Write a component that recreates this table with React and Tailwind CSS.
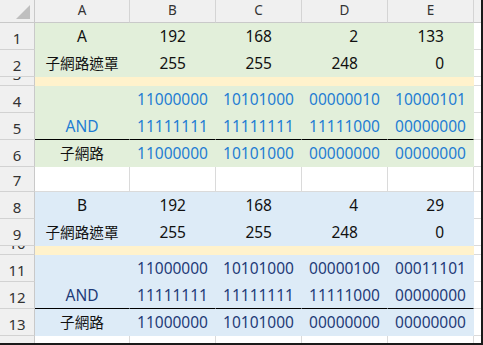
import React from "react";

const FILL = {
  g: "bg-[#E2EFDA] border-r-[#E2EFDA]",
  b: "bg-[#DDEBF7] border-r-[#DDEBF7]",
  y: "bg-[#FFF2CC] border-r-[#FFF2CC]",
  w: "bg-white border-r-[#DADADA]",
};
const BOTTOM = {
  g: "border-b-[#E2EFDA]",
  b: "border-b-[#DDEBF7]",
  y: "border-b-[#FFF2CC]",
  w: "border-b-[#DADADA]",
  k: "border-b-black",
};
const TEXT = {
  k: "text-[#111]",
  blue: "text-[#1F7DD3]",
  navy: "text-[#1F3B78]",
};

const num = (t) => ({ t, kind: "num", c: "k" });
const bin = (t, c) => ({ t, kind: "bin", c });
const lbl = (t, c = "k") => ({ t, kind: "lbl", c });

const rows = [
  { n: "1", f: "g", cells: [lbl("A"), num("192"), num("168"), num("2"), num("133")] },
  { n: "2", f: "g", cells: [lbl("子網路遮罩"), num("255"), num("255"), num("248"), num("0")] },
  { n: "3", f: "y", h: "h-[9px]" },
  {
    n: "4",
    f: "g",
    cells: [lbl(""), ...["11000000", "10101000", "00000010", "10000101"].map((t) => bin(t, "blue"))],
  },
  {
    n: "5",
    f: "g",
    line: true,
    cells: [lbl("AND", "blue"), ...["11111111", "11111111", "11111000", "00000000"].map((t) => bin(t, "blue"))],
  },
  {
    n: "6",
    f: "g",
    cells: [lbl("子網路"), ...["11000000", "10101000", "00000000", "00000000"].map((t) => bin(t, "blue"))],
  },
  { n: "7", f: "w", h: "h-[25px]" },
  { n: "8", f: "b", cells: [lbl("B"), num("192"), num("168"), num("4"), num("29")] },
  { n: "9", f: "b", cells: [lbl("子網路遮罩"), num("255"), num("255"), num("248"), num("0")] },
  { n: "10", f: "y", h: "h-[9px]" },
  {
    n: "11",
    f: "b",
    cells: [lbl(""), ...["11000000", "10101000", "00000100", "00011101"].map((t) => bin(t, "navy"))],
  },
  {
    n: "12",
    f: "b",
    line: true,
    cells: [lbl("AND", "navy"), ...["11111111", "11111111", "11111000", "00000000"].map((t) => bin(t, "navy"))],
  },
  {
    n: "13",
    f: "b",
    cells: [lbl("子網路"), ...["11000000", "10101000", "00000000", "00000000"].map((t) => bin(t, "navy"))],
  },
  { n: "14", f: "w" },
];

const colW = ["w-[95px]", "w-[86px]", "w-[86px]", "w-[86px]", "w-[86px]"];

function Cell({ cell, fill, bottom, width }) {
  const align =
    cell && cell.kind === "num" ? "justify-end pr-[29px]" : "justify-center";
  return (
    <div
      className={`${width} h-full shrink-0 flex items-center ${align} border-r border-b ${FILL[fill]} ${BOTTOM[bottom]} ${
        cell ? TEXT[cell.c] : ""
      } pt-[1px] whitespace-nowrap`}
    >
      {cell && /[\u4e00-\u9fff]/.test(cell.t) ? (
        <span className="text-[14.6px] tracking-[0px]">{cell.t}</span>
      ) : (
        cell && cell.t
      )}
    </div>
  );
}

function Row({ row }) {
  const bottom = row.line ? "k" : row.f;
  return (
    <div className={`flex ${row.h || "h-[27px]"} shrink-0`}>
      <div className="w-[35px] shrink-0 h-full bg-[#F0F0F0] border-r border-r-[#C9C9C9] border-b border-b-[#D2D2D2] flex items-end justify-center overflow-hidden text-[15px] leading-none text-[#333] pb-[3px]">
        {row.n}
      </div>
      {colW.map((w, i) => (
        <Cell
          key={i}
          width={w}
          fill={row.f}
          bottom={bottom}
          cell={row.cells ? row.cells[i] : null}
        />
      ))}
      <div className="flex-1 h-full bg-white border-b border-b-[#DADADA]" />
    </div>
  );
}

export default function App() {
  return (
    <div className="w-[483px] h-[345px] overflow-hidden bg-white border-r-2 border-b-2 border-r-[#1a1a1a] border-b-[#1a1a1a] font-['Noto_Sans','Noto_Sans_CJK_TC',sans-serif] text-[15.5px] leading-none flex flex-col">
      {/* column headers */}
      <div className="flex h-[23px] shrink-0 bg-[#F0F0F0] text-[13.5px] text-[#333]">
        <div className="w-[35px] shrink-0 h-full border-r border-b border-r-[#C9C9C9] border-b-[#C9C9C9] relative">
          <svg className="absolute right-[4px] bottom-[3px]" width="14" height="14" viewBox="0 0 14 14">
            <polygon points="14,0 14,14 0,14" fill="#BFBFBF" />
          </svg>
        </div>
        {["A", "B", "C", "D", "E"].map((l, i) => (
          <div
            key={l}
            className={`${colW[i]} shrink-0 h-full flex items-center justify-center border-r border-b border-r-[#D4D4D4] border-b-[#C9C9C9]`}
          >
            {l}
          </div>
        ))}
        <div className="flex-1 h-full border-b border-b-[#C9C9C9]" />
      </div>
      {rows.map((r) => (
        <Row key={r.n} row={r} />
      ))}
    </div>
  );
}
